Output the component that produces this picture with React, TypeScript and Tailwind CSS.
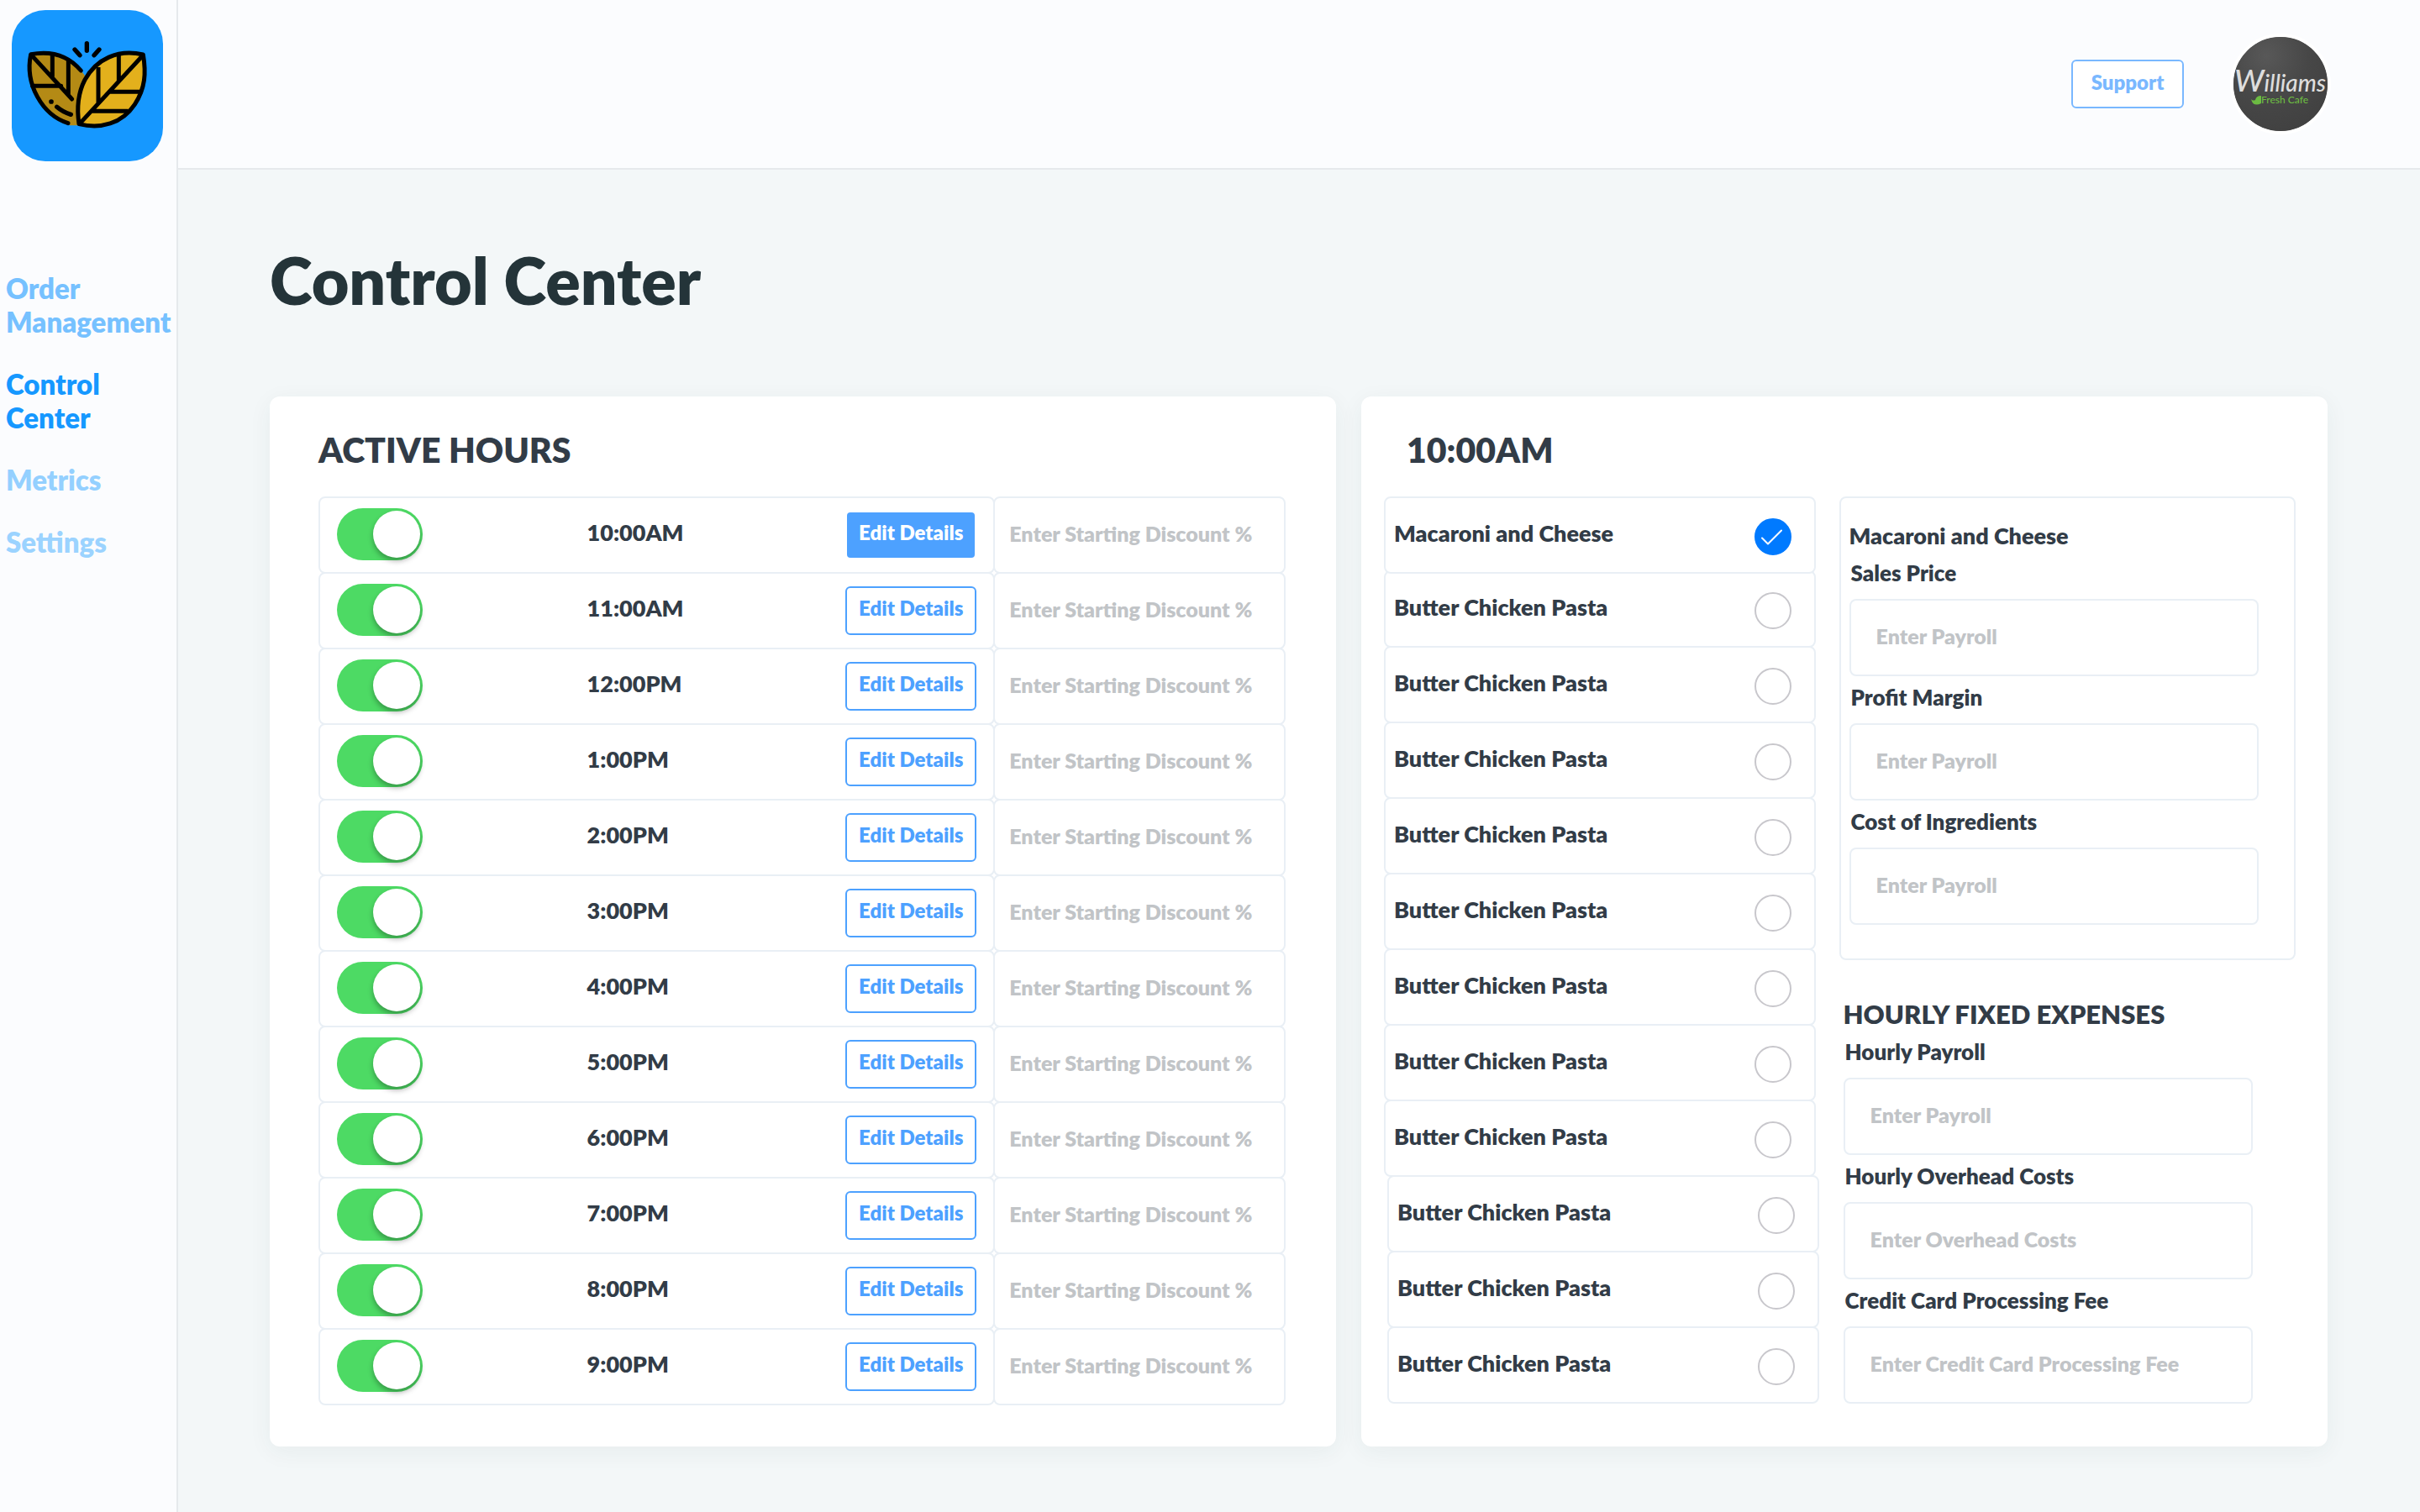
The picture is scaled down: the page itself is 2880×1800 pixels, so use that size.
import React, { useState } from "react";

const HOURS = [
  "10:00AM", "11:00AM", "12:00PM", "1:00PM", "2:00PM", "3:00PM",
  "4:00PM", "5:00PM", "6:00PM", "7:00PM", "8:00PM", "9:00PM",
];

const DISHES = ["Macaroni and Cheese", ...Array<string>(11).fill("Butter Chicken Pasta")];

const NAV = [
  { label: "Order Management", tone: "text-[#76c1ff]" },
  { label: "Control Center", tone: "text-[#1698ff]" },
  { label: "Metrics", tone: "text-[#94d0ff]" },
  { label: "Settings", tone: "text-[#9bd3ff]" },
];

function LeafLogo() {
  return (
    <svg viewBox="0 0 180 180" className="size-full" aria-hidden="true">
      <g transform="translate(6 28) scale(0.33333)" fill="none" stroke="#000" strokeLinecap="round" strokeLinejoin="round">
        <path d="M50 72C120 62 190 75 243 150L226 200L218 328H190C100 300 30 200 50 72Z" fill="#b48a15" stroke="none" />
        <path d="M229 132C185 80 125 60 50 74C28 180 90 290 183 320" strokeWidth="15" />
        <path d="M55 80L197 234M127 78V152M184 100V215M56 187H158" strokeWidth="15" />
        <path d="M143 262Q165 281 193 289" strokeWidth="16" />
        <circle cx="123" cy="243" r="8.5" fill="#000" stroke="none" />
        <path d="M451 75C360 55 285 90 243 165C217 215 215 275 222 323C300 342 375 322 421 253C459 195 462 140 451 75Z" fill="#e3b01c" strokeWidth="15" />
        <path d="M450 78L224 322M364 78V168M291 120V248M332 208H440M270 277H398" strokeWidth="15" strokeLinecap="butt" />
        <path d="M250 35V61M207 57L225 77M294 57L276 77" strokeWidth="16" />
      </g>
    </svg>
  );
}

function CafeAvatar() {
  return (
    <svg viewBox="0 0 112 112" className="size-[120px] rounded-full border-4 border-white bg-[#484848]" role="img" aria-label="Williams Fresh Cafe">
      <defs>
        <radialGradient id="chalk" cx="0.35" cy="0.2" r="0.9">
          <stop offset="0" stopColor="#585858" />
          <stop offset="0.5" stopColor="#474747" />
          <stop offset="1" stopColor="#404040" />
        </radialGradient>
      </defs>
      <circle cx="56" cy="56" r="56" fill="url(#chalk)" />
      <text x="1" y="65" fill="#dedede" fontFamily="Lato, sans-serif" fontStyle="italic" fontWeight="500" fontSize="28">
        <tspan fontSize="37">W</tspan>illiams
      </text>
      <text x="33" y="79" fill="#6cbb42" fontFamily="Lato, sans-serif" fontSize="12" fontWeight="500">Fresh Cafe</text>
      <path d="M21 74q2 2.500 5 1q1-5 7-5v9q-8 4-11-2z" fill="#6cbb42" />
    </svg>
  );
}

function Field({ id, label, placeholder }: { id: string; label: string; placeholder: string }) {
  return (
    <div className="flex flex-col gap-[15px]">
      <label htmlFor={id} className="pl-0.5 text-[26px] leading-8">{label}</label>
      <input
        id={id}
        type="text"
        placeholder={placeholder}
        className="h-[92px] w-full rounded-lg border-2 border-[#e9eff5] bg-white pb-1 pl-[30px] text-[25px] outline-none placeholder:text-[#c1c4c7]"
      />
    </div>
  );
}

function HourRow({ hour, active, onEdit }: { hour: string; active: boolean; onEdit: () => void }) {
  return (
    <li className="-mt-0.5 flex first:mt-0">
      <div className="grid h-[92px] flex-[806_1_0px] grid-cols-[298fr_308fr_156px] items-center rounded-lg border-2 border-[#e9eff5] px-5 pb-0.5">
        <input
          type="checkbox"
          role="switch"
          defaultChecked
          aria-label={`${hour} active`}
          className="h-[62px] w-[102px] appearance-none rounded-full bg-[#d5d8db] p-[3px] before:block before:size-14 before:rounded-full before:bg-white before:shadow-[0_4px_6px_rgba(0,0,0,0.3)] checked:bg-[#4dda64] checked:before:ml-10"
        />
        <span className="pb-1 text-[27px] leading-8">{hour}</span>
        <button
          type="button"
          onClick={onEdit}
          aria-pressed={active}
          className={`mt-0.5 h-[58px] rounded-md border-2 pb-1.5 text-2xl ${
            active ? "border-transparent bg-[#4da1ff] bg-clip-padding text-white" : "border-[#4da1ff] bg-white text-[#4da1ff]"
          }`}
        >
          Edit Details
        </button>
      </div>
      <input
        type="text"
        aria-label={`${hour} starting discount percent`}
        placeholder="Enter Starting Discount %"
        className="-ml-0.5 h-[92px] min-w-0 flex-[346_1_0px] rounded-lg border-2 border-[#e9eff5] bg-transparent pb-1 pl-[17px] text-[25px] outline-none placeholder:text-[#c1c4c7]"
      />
    </li>
  );
}

function DishRow({ name, index }: { name: string; index: number }) {
  const overlap = index === 0 ? "relative z-10" : index === 1 ? "-mt-1" : "-mt-0.5";
  const shift = index > 8 ? "ml-1 -mr-1" : "";
  return (
    <li className={`${overlap} ${shift}`}>
      <label className="flex h-[92px] items-center justify-between rounded-lg border-2 border-[#e9eff5] bg-white pr-[27px] pl-2.5">
        <span className="pb-1 text-[27px] leading-8">{name}</span>
        <span className="grid place-items-center pt-1">
          <input
            type="radio"
            name="dish"
            defaultChecked={index === 0}
            className="peer col-start-1 row-start-1 size-11 appearance-none rounded-full border-2 border-[#c8c7cc] checked:border-[#007aff] checked:bg-[#007aff]"
          />
          <svg viewBox="0 0 44 44" className="pointer-events-none invisible col-start-1 row-start-1 size-11 peer-checked:visible" aria-hidden="true">
            <path d="M9 23.500L16 30.500L32 14.500" fill="none" stroke="#fff" strokeWidth="2" strokeLinecap="round" strokeLinejoin="round" />
          </svg>
        </span>
      </label>
    </li>
  );
}

export default function App() {
  const [selected, setSelected] = useState(0);
  const card = "rounded-xl bg-white pt-10 pb-[49px] shadow-[0_6px_28px_rgba(40,70,70,0.06)]";

  return (
    <div className="flex min-h-screen bg-[#f3f7f8] font-['Lato',sans-serif] font-extrabold text-[#323c47]">
      <aside className="w-[212px] shrink-0 border-r-2 border-[#e6e9ec] bg-[#fbfcfe] pt-3">
        <a href="#home" aria-label="Home" className="ml-3.5 block size-[180px] overflow-hidden rounded-[40px] bg-[#1698ff]">
          <LeafLogo />
        </a>
        <nav className="mt-[131px]">
          <ul className="flex flex-col gap-[34px] pl-[7px] text-[33px] leading-10">
            {NAV.map((item) => (
              <li key={item.label}>
                <a href="#nav" className={`block ${item.tone}`}>{item.label}</a>
              </li>
            ))}
          </ul>
        </nav>
      </aside>

      <div className="min-w-0 flex-1">
        <header className="flex h-[202px] items-center justify-end gap-[55px] border-b-2 border-[#e6e9ec] bg-[#fbfcfe] pr-[106px]">
          <button type="button" className="h-[58px] w-[134px] rounded-md border-2 border-[#7ab8ff] bg-white pb-1 text-2xl text-[#7ab8ff]">
            Support
          </button>
          <CafeAvatar />
        </header>

        <main className="pt-[85px] pr-[110px] pb-[78px] pl-[109px]">
          <h1 className="text-[77px] leading-[92px] text-[#243439]">Control Center</h1>

          <div className="mt-[93px] grid grid-cols-[1269fr_1150fr] gap-[30px]">
            <section className={`${card} pr-[60px] pl-[58px]`}>
              <h2 className="mb-[31px] text-[41px] leading-[48px]">ACTIVE HOURS</h2>
              <ul>
                {HOURS.map((hour, i) => (
                  <HourRow key={hour} hour={hour} active={i === selected} onEdit={() => setSelected(i)} />
                ))}
              </ul>
            </section>

            <section className={`${card} pr-[38px] pl-[27px]`}>
              <h2 className="mb-[31px] pl-[27px] text-[41px] leading-[48px]">{HOURS[selected]}</h2>
              <div className="grid grid-cols-[514fr_544fr] gap-7">
                <ul>
                  {DISHES.map((name, i) => (
                    <DishRow key={i} name={name} index={i} />
                  ))}
                </ul>
                <div>
                  <div className="flex flex-col gap-[9px] rounded-lg border-2 border-[#e9eff5] pt-[29px] pr-[42px] pb-10 pl-2.5">
                    <h3 className="mb-[3px] text-[27px] leading-8">Macaroni and Cheese</h3>
                    <Field id="sales-price" label="Sales Price" placeholder="Enter Payroll" />
                    <Field id="profit-margin" label="Profit Margin" placeholder="Enter Payroll" />
                    <Field id="ingredients" label="Cost of Ingredients" placeholder="Enter Payroll" />
                  </div>
                  <div className="mt-[46px] flex flex-col gap-[9px] pr-[51px] pl-[5px]">
                    <h3 className="mb-0.5 text-[31px] leading-9">HOURLY FIXED EXPENSES</h3>
                    <Field id="payroll" label="Hourly Payroll" placeholder="Enter Payroll" />
                    <Field id="overhead" label="Hourly Overhead Costs" placeholder="Enter Overhead Costs" />
                    <Field id="card-fee" label="Credit Card Processing Fee" placeholder="Enter Credit Card Processing Fee" />
                  </div>
                </div>
              </div>
            </section>
          </div>
        </main>
      </div>
    </div>
  );
}
